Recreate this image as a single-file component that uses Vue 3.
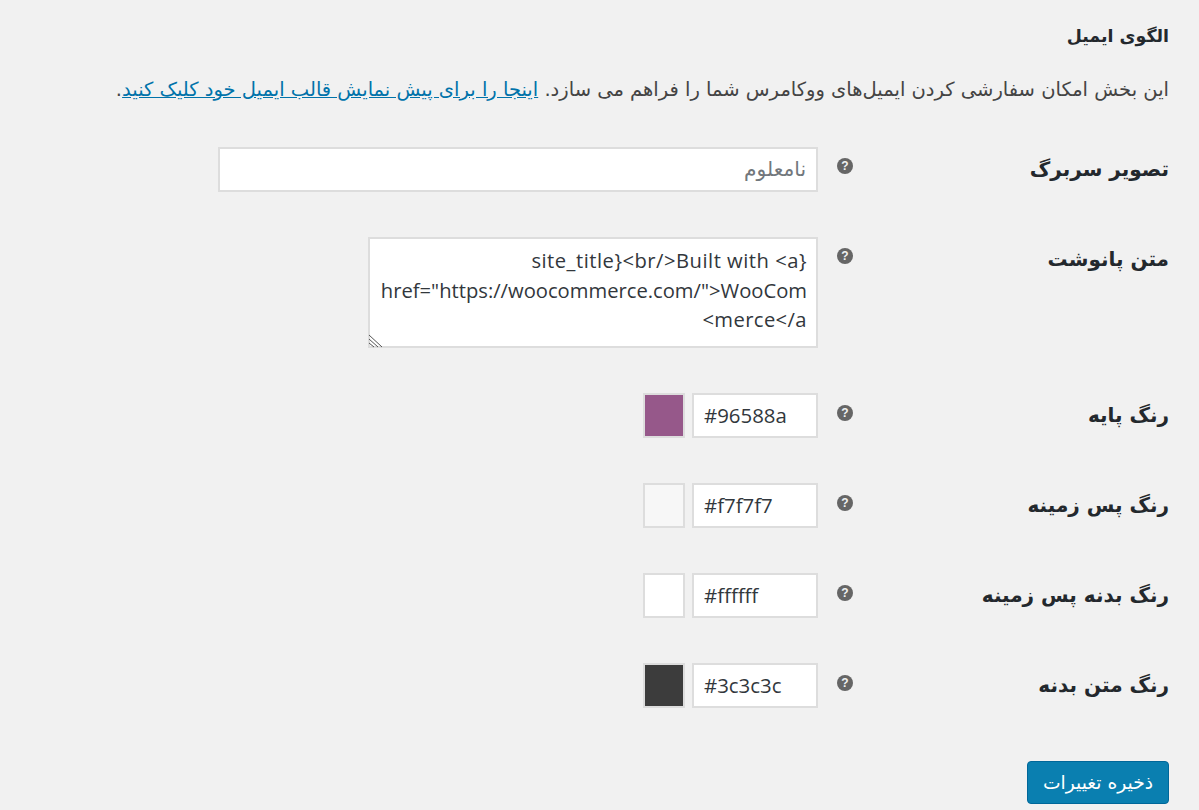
<script setup>
const colors = [
  { label: 'رنگ پایه', value: '#96588a' },
  { label: 'رنگ پس زمینه', value: '#f7f7f7' },
  { label: 'رنگ بدنه پس زمینه', value: '#ffffff' },
  { label: 'رنگ متن بدنه', value: '#3c3c3c' }
]
</script>

<template>
  <main class="page" dir="rtl">
    <h2 class="title">الگوی ایمیل</h2>
    <p class="intro">این بخش امکان سفارشی کردن ایمیل‌های ووکامرس شما را فراهم می سازد. <a href="#">اینجا را برای پیش نمایش قالب ایمیل خود کلیک کنید</a>.</p>

    <div class="form">
      <div class="row">
        <label class="label">تصویر سربرگ</label>
        <span class="help" aria-hidden="true">?</span>
        <div class="box wide placeholder">نامعلوم</div>
      </div>
      <div class="row">
        <label class="label">متن پانوشت</label>
        <span class="help" aria-hidden="true">?</span>
        <div class="box area">
          <div class="spread">{<bdo dir="ltr">site_title}&lt;br/&gt;Built with &lt;a</bdo></div>
          <div>href="https://woocommerce.com/"&gt;WooCom</div>
          <div class="spread-small">merce&lt;/a&gt;</div>
          <svg class="grip" width="16" height="14" viewBox="0 0 16 14">
            <path d="M0 1L13 13M0 5L9 13M0 9L5 13" stroke="#555" stroke-width="1" fill="none" />
          </svg>
        </div>
      </div>
      <div v-for="c in colors" :key="c.value" class="row color-row">
        <label class="label">{{ c.label }}</label>
        <span class="help" aria-hidden="true">?</span>
        <div class="box code" dir="ltr">{{ c.value }}</div>
        <span class="swatch" :style="{ backgroundColor: c.value }"></span>
      </div>
    </div>

    <button class="save" type="button">ذخیره تغییرات</button>
  </main>
</template>

<style>
html, body { margin: 0; background: #f1f1f1; }
</style>

<style scoped>
.page {
  box-sizing: border-box;
  width: 1199px;
  height: 810px;
  overflow: hidden;
  padding: 0 30px 0 0;
  background: #f1f1f1;
  color: #444;
  font-family: "DejaVu Sans", sans-serif;
}
.title {
  margin: 0;
  padding-top: 26px;
  height: 24px;
  line-height: 20px;
  font-size: 17.4px;
  font-weight: 700;
  color: #23282d;
  white-space: nowrap;
}
.intro {
  margin: 0;
  padding-top: 30px;
  height: 67px;
  line-height: 20px;
  font-size: 19.5px;
  color: #444;
  white-space: nowrap;
}
.intro a { color: #0073aa; text-decoration: underline; }
.form { display: flex; flex-direction: column; gap: 45px; }
.row { display: flex; align-items: flex-start; }
.label {
  width: 316px;
  flex: none;
  padding-top: 10px;
  line-height: 24px;
  font-size: 20px;
  font-weight: 700;
  color: #23282d;
}
.help {
  box-sizing: border-box;
  width: 16px;
  height: 16px;
  margin-top: 11px;
  margin-left: 19px;
  flex: none;
  border-radius: 50%;
  background: #666;
  color: #f1f1f1;
  font: 700 12px/16px "Liberation Sans", sans-serif;
  text-align: center;
}
.color-row .help { margin-top: 12px; }
.box {
  box-sizing: border-box;
  flex: none;
  border: 2px solid #ddd;
  background: #fff;
  color: #32373c;
  font-family: "Open Sans", "DejaVu Sans", sans-serif;
}
.wide {
  width: 600px;
  height: 45px;
  padding: 0 10px;
  line-height: 41px;
  font-family: "DejaVu Sans", sans-serif;
  font-size: 20.2px;
}
.placeholder { color: #72777c; }
.area {
  position: relative;
  width: 450px;
  height: 111px;
  padding: 7px 9px;
  font-size: 20.2px;
  line-height: 29.5px;
  white-space: nowrap;
}
.spread { letter-spacing: 0.5px; }
.spread-small { letter-spacing: 0.4px; }
.grip { position: absolute; left: -1px; bottom: -2px; }
.code {
  width: 126px;
  height: 45px;
  padding: 0 10px;
  line-height: 41px;
  font-size: 20.4px;
  text-align: left;
}
.swatch {
  box-sizing: border-box;
  width: 42px;
  height: 45px;
  margin-right: 7px;
  flex: none;
  border: 2px solid #ddd;
}
.save {
  display: block;
  box-sizing: border-box;
  width: 142px;
  height: 43px;
  margin: 53px 0 0;
  padding: 0;
  border: 1px solid #006799;
  border-radius: 4px;
  background: #0a7fb0;
  color: #fff;
  font-family: "DejaVu Sans", sans-serif;
  font-size: 18.7px;
}
</style>
